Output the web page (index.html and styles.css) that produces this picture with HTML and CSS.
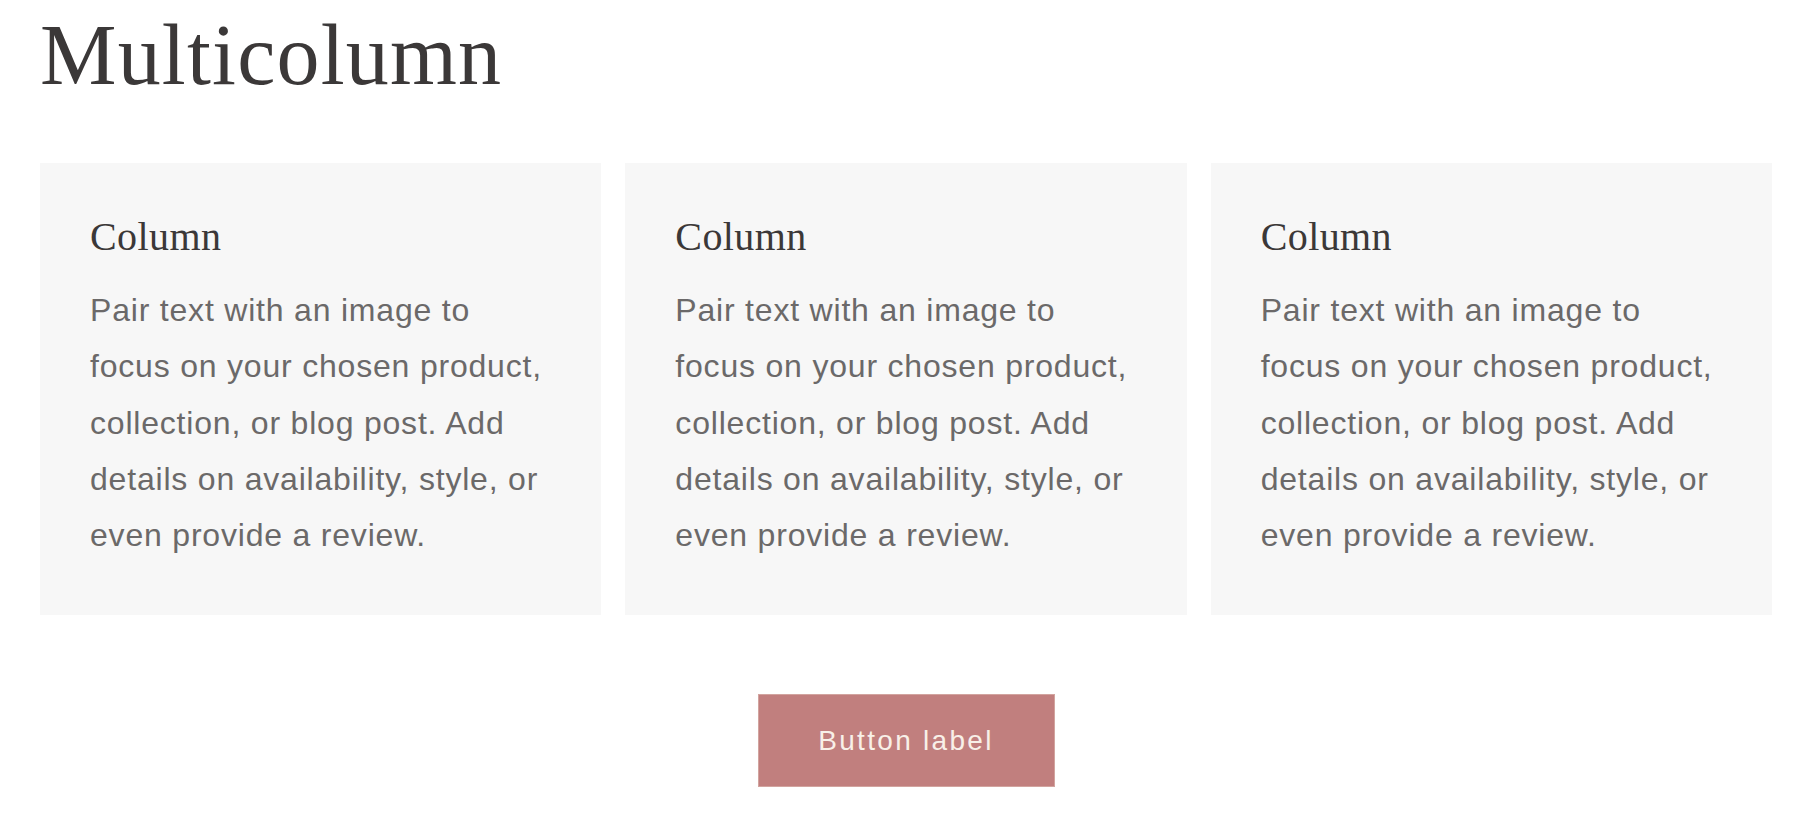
FILE: index.html
```html
<!DOCTYPE html>
<html lang="en">
<head>
<meta charset="utf-8">
<title>Multicolumn</title>
<link rel="stylesheet" href="styles.css">
</head>
<body>
<section class="multicolumn">
  <h2 class="title">Multicolumn</h2>
  <ul class="columns">
    <li class="card">
      <h3 class="card-title">Column</h3>
      <p class="card-text">Pair text with an image to focus on your chosen product, collection, or blog post. Add details on availability, style, or even provide a review.</p>
    </li>
    <li class="card">
      <h3 class="card-title">Column</h3>
      <p class="card-text">Pair text with an image to focus on your chosen product, collection, or blog post. Add details on availability, style, or even provide a review.</p>
    </li>
    <li class="card">
      <h3 class="card-title">Column</h3>
      <p class="card-text">Pair text with an image to focus on your chosen product, collection, or blog post. Add details on availability, style, or even provide a review.</p>
    </li>
  </ul>
  <div class="actions">
    <a class="button" href="#">Button label</a>
  </div>
</section>
</body>
</html>
```

FILE: styles.css
```css
html, body {
  margin: 0;
  padding: 0;
  background: #ffffff;
}

body {
  font-family: "Liberation Sans", Arial, sans-serif;
  color: #3b3838;
}

.multicolumn {
  padding: 12px 40px 0;
}

.title {
  margin: 0 0 65px;
  font-family: "Liberation Serif", "Times New Roman", serif;
  font-weight: 400;
  font-size: 86px;
  line-height: 86px;
  letter-spacing: 1.2px;
  color: #3b3838;
}

.columns {
  list-style: none;
  margin: 0;
  padding: 0;
  display: grid;
  grid-template-columns: repeat(3, 1fr);
  gap: 24px;
}

.card {
  background: #f7f7f7;
  padding: 48px 50px 52px;
}

.card-title {
  margin: 0 0 19px;
  font-family: "Liberation Serif", "Times New Roman", serif;
  font-weight: 400;
  font-size: 40px;
  line-height: 52px;
  letter-spacing: 0.4px;
  color: #3b3838;
}

.card-text {
  margin: 0;
  font-size: 32px;
  line-height: 56.25px;
  letter-spacing: 0.8px;
  color: #6b6969;
}

.actions {
  display: flex;
  justify-content: center;
  padding-top: 79px;
}

.button {
  display: flex;
  align-items: center;
  justify-content: center;
  box-sizing: border-box;
  width: 297px;
  height: 93px;
  background: #c17f7e;
  border: 1px solid #d2a49f;
  color: #f8f0e8;
  font-size: 28px;
  letter-spacing: 2.3px;
  text-decoration: none;
}
```
